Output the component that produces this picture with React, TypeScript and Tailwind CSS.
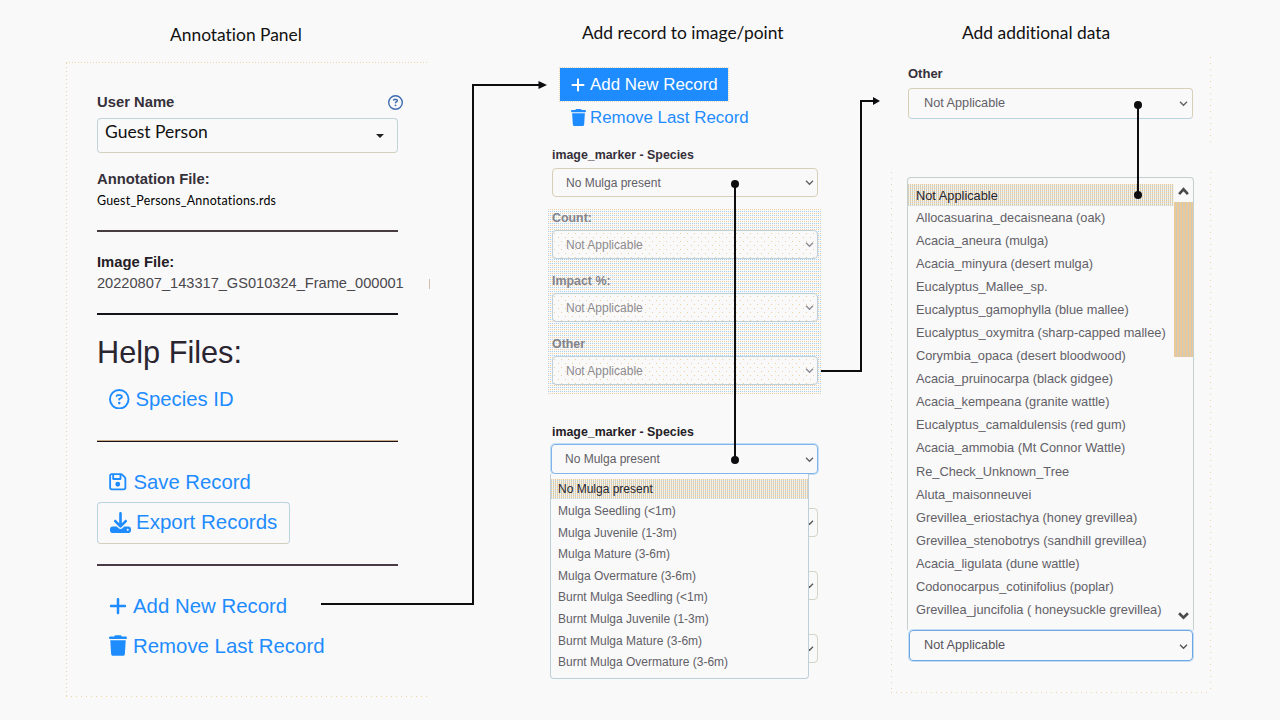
import type { ReactNode } from "react";
import {
  FaDownload,
  FaPlus,
  FaRegCircleQuestion,
  FaRegFloppyDisk,
  FaTrash,
} from "react-icons/fa6";

const SPECIES = [
  "No Mulga present",
  "Mulga Seedling (<1m)",
  "Mulga Juvenile (1-3m)",
  "Mulga Mature (3-6m)",
  "Mulga Overmature (3-6m)",
  "Burnt Mulga Seedling (<1m)",
  "Burnt Mulga Juvenile (1-3m)",
  "Burnt Mulga Mature (3-6m)",
  "Burnt Mulga Overmature (3-6m)",
];

const OTHER = [
  "Not Applicable",
  "Allocasuarina_decaisneana (oak)",
  "Acacia_aneura (mulga)",
  "Acacia_minyura (desert mulga)",
  "Eucalyptus_Mallee_sp.",
  "Eucalyptus_gamophylla (blue mallee)",
  "Eucalyptus_oxymitra (sharp-capped mallee)",
  "Corymbia_opaca (desert bloodwood)",
  "Acacia_pruinocarpa (black gidgee)",
  "Acacia_kempeana (granite wattle)",
  "Eucalyptus_camaldulensis (red gum)",
  "Acacia_ammobia (Mt Connor Wattle)",
  "Re_Check_Unknown_Tree",
  "Aluta_maisonneuvei",
  "Grevillea_eriostachya (honey grevillea)",
  "Grevillea_stenobotrys (sandhill grevillea)",
  "Acacia_ligulata (dune wattle)",
  "Codonocarpus_cotinifolius (poplar)",
  "Grevillea_juncifolia ( honeysuckle grevillea)",
];

// Stippled fills: a dense tan/blue grid, a denser one for selected rows, and sparse tan dots.
const DOTS =
  "bg-[linear-gradient(180deg,transparent_1px,#f9f9f9_1px),linear-gradient(90deg,transparent_1px,#f9f9f9_1px),linear-gradient(180deg,#efcf9f_2px,#a3d0f3_2px)] bg-[length:100%_2px,2px_100%,100%_4px]";
const SELECTED =
  "bg-[linear-gradient(90deg,transparent_1px,#f7f0e2_1px),linear-gradient(180deg,#edcb98_1px,#bcd6e6_1px)] bg-[length:2px_100%,100%_2px]";
const SPARSE =
  "bg-[#f9f9f9] bg-[conic-gradient(from_270deg_at_1px_1px,#efcf9f_90deg,transparent_0),conic-gradient(from_270deg_at_1px_1px,#efcf9f_90deg,transparent_0)] bg-[length:7px_8px] bg-[position:1px_2px,5px_6px]";

function Chevron({ up = false, bold = false }: { up?: boolean; bold?: boolean }) {
  return (
    <svg
      viewBox="0 0 10 8"
      className={bold ? "h-[9px] w-[11px]" : "h-[7px] w-[9px]"}
      fill="none"
      stroke="currentColor"
      strokeWidth={bold ? 2.4 : 1.5}
    >
      <path d={up ? "M1 6.4 5 2l4 4.4" : "M1 2l4 4 4-4"} />
    </svg>
  );
}

function Select({
  children,
  className,
}: {
  children?: ReactNode;
  className: string;
}) {
  return (
    <div className={`flex items-center justify-between rounded-[4px] border ${className}`}>
      <span>{children}</span>
      <Chevron />
    </div>
  );
}

function Title({ children, className }: { children: ReactNode; className: string }) {
  return (
    <h2
      className={`font-['Lato','Liberation_Sans',sans-serif] text-[17.4px] leading-6 text-[#111] [font-variant-ligatures:none] ${className}`}
    >
      {children}
    </h2>
  );
}

function AnnotationPanel() {
  return (
    <section className="ml-[66px] w-[364px] pt-[23px]">
      <Title className="ml-[104px]">Annotation Panel</Title>
      <div className="mt-[15px] mr-[2px] h-px bg-[repeating-linear-gradient(90deg,#f1d3a5_0_1px,transparent_1px_3px)]" />
      <div className="flex h-[633px]">
        <div className="w-px bg-[repeating-linear-gradient(180deg,#e6d3b0_0_1px,transparent_1px_4px)]" />
        <div className="ml-[30px] w-[301px] whitespace-nowrap text-[#35303a]">
          <div className="mt-[29px] flex h-5 items-center justify-between text-[14.8px] font-bold">
            <span className="pt-px">User Name</span>
            <FaRegCircleQuestion className="-mr-[5px] size-[15px] text-[#3d6cb0]" />
          </div>
          <div className="mt-[6px] flex h-[35px] justify-between rounded-[4px] border border-[#c3d3da] border-b-[#d2cfbe] pl-[7px] pr-[13px]">
            <span className="font-['Lato'] text-[17.5px] leading-[26px] text-[#111]">
              Guest Person
            </span>
            <svg viewBox="0 0 8 4" className="mt-[15px] h-1 w-2 fill-[#222]">
              <path d="M0 0h8L4 4z" />
            </svg>
          </div>
          <div className="mt-4 h-5 text-[14.8px] font-bold leading-5">Annotation File:</div>
          <div className="h-6 font-['Lato'] text-[12.4px] leading-6 tracking-[0.24px] text-black [font-variant-ligatures:none]">
            Guest_Persons_Annotations.rds
          </div>
          <div className="mt-[17px] h-[2px] bg-[#463c42]" />
          <div className="mt-[20px] h-5 text-[14.8px] font-bold leading-[21px] text-[#242026]">
            Image File:
          </div>
          <div className="mt-px flex h-[21px] items-center text-[14.6px] text-[#4a474d]">
            20220807_143317_GS010324_Frame_000001
            <span className="ml-[25px] h-[10px] w-px shrink-0 bg-[#cfbfae]" />
          </div>
          <div className="mt-[19px] h-[2px] bg-[#17131a]" />
          <div className="mt-[18px] h-10 text-[30.7px] leading-10 text-[#2a2530]">
            Help Files:
          </div>
          <div className="ml-3 mt-[12px] flex h-7 items-center gap-[6px] text-[20.3px] text-[#1e8cff]">
            <FaRegCircleQuestion className="size-[20.500px]" />
            Species ID
          </div>
          <div className="mt-[27px] h-px bg-[#c8a888]" />
          <div className="h-px bg-[#17131a]" />
          <div className="ml-[11px] mt-[26px] flex h-7 items-center gap-[6px] text-[20.3px] text-[#1e8cff]">
            <FaRegFloppyDisk className="size-[19.500px]" />
            Save Record
          </div>
          <div className="mt-[6px] flex h-[42px] w-[193px] items-center gap-[5px] rounded-[4px] border border-[#b9d3e3] border-b-[#d2cfbe] pl-[12px] text-[20.5px] text-[#1e8cff]">
            <FaDownload className="mb-[2px] size-[21px]" />
            <span className="pb-px">Export Records</span>
          </div>
          <div className="mt-[20px] h-[2px] bg-[#493c46]" />
          <div className="ml-[11px] mt-[26px] flex h-7 items-center gap-[5px] text-[20.4px] text-[#1e8cff]">
            <FaPlus className="size-5" />
            Add New Record
          </div>
          <div className="ml-3 mt-[12px] flex h-7 items-center gap-[6px] text-[20.4px] text-[#1e8cff]">
            <FaTrash className="mb-px h-[21px] w-[18px]" />
            Remove Last Record
          </div>
        </div>
      </div>
      <div className="mr-[2px] h-px bg-[repeating-linear-gradient(90deg,#f1d3a5_0_1px,transparent_1px_5px)]" />
    </section>
  );
}

function RecordPanel() {
  const box = "h-[29px] w-[266px] pl-[13px] pr-[3px] text-[12px]";
  return (
    <section className="ml-[118px] w-[274px] whitespace-nowrap pt-[21px]">
      <Title className="ml-[34px]">Add record to image/point</Title>
      <div className="ml-3 mt-[23px] flex h-[33px] w-[168px] items-center gap-[4px] bg-[#1e8cff] pl-[10px] text-[16.9px] text-white outline-1 outline-dotted outline-[#ecd9b4]">
        <FaPlus className="size-4" />
        Add New Record
      </div>
      <div className="ml-[23px] mt-[4px] flex h-6 items-center gap-[4px] text-[16.9px] text-[#1e8cff]">
        <FaTrash className="h-[17px] w-[15px]" />
        <span className="pt-px">Remove Last Record</span>
      </div>
      <div className="ml-1 mt-[16px] h-5 text-[12.4px] font-bold leading-[21px] text-[#35303a]">
        image_marker - Species
      </div>
      <Select className={`ml-1 mt-[3px] ${box} border-[#d8cfb8] text-[#626067]`}>
        No Mulga present
      </Select>
      <div className={`mt-[12px] h-[186px] pl-1 text-[#8d8b90] ${DOTS}`}>
        {["Count:", "Impact %:", "Other"].map((label) => (
          <div key={label} className="h-[63px]">
            <div className="h-[21px] text-[12.4px] font-bold leading-[18px] text-[#85838a]">
              {label}
            </div>
            <Select className={`${box} border-[#bdcfd8] ${SPARSE}`}>Not Applicable</Select>
          </div>
        ))}
      </div>
      <div className="ml-1 mt-[27px] h-5 text-[12.4px] font-bold leading-5 text-[#242026]">
        image_marker - Species
      </div>
      <div className="relative ml-[3px] mt-[2px]">
        <Select className="h-[30px] w-[267px] border-[#7fb3ea] pl-[13px] pr-[3px] text-[12px] text-[#626067] shadow-[0_0_0_1px_#c3def4]">
          No Mulga present
        </Select>
        {[0, 1, 2].map((row) => (
          <Select
            key={row}
            className="mt-[34px] h-[29px] w-[267px] border-[#d3d3c6] pr-[3px] text-[#555]"
          />
        ))}
        <div className="absolute -left-px top-[30px] h-[205px] w-[259px] rounded-b-[4px] border border-t-0 border-[#bdd0da] bg-[#f9f9f9] pt-[5px] text-[12px] text-[#626067]">
          {SPECIES.map((name, i) => (
            <div
              key={name}
              className={
                i === 0
                  ? `mb-[2px] h-5 pl-[7px] leading-[21px] text-[#28242c] ${SELECTED}`
                  : "h-[21.6px] pl-[7px] leading-[21.6px]"
              }
            >
              {name}
            </div>
          ))}
        </div>
      </div>
    </section>
  );
}

function DataPanel() {
  return (
    <section className="ml-[69px] w-[320px] whitespace-nowrap pt-[21px]">
      <Title className="ml-[71px]">Add additional data</Title>
      <div className="mt-3 flex h-[115px]">
        <div className="w-[319px] pl-[17px] pt-[7px]">
          <div className="h-5 text-[13px] font-bold leading-5 text-[#35303a]">Other</div>
          <Select className="mt-[4px] h-[31px] w-[285px] border-[#d8cfb8] border-b-[#b9d3e3] pl-[15px] pr-[4px] text-[12.7px] text-[#626067]">
            Not Applicable
          </Select>
        </div>
        <div className="h-[88px] w-px bg-[repeating-linear-gradient(180deg,#f1d3a5_0_1px,transparent_1px_6px)]" />
      </div>
      <div className="flex h-[520px]">
        <div className="w-px bg-[repeating-linear-gradient(180deg,#dfd0b8_0_1px,transparent_1px_6px)]" />
        <div className="ml-[15px] w-[303px] pt-[5px]">
          <div className="flex h-[453px] w-[287px] rounded-t-[4px] border border-b-0 border-[#c4cfcf]">
            <div className="w-[267px] pt-[6px] text-[12.8px] text-[#626067]">
              {OTHER.map((name, i) => (
                <div
                  key={name}
                  className={
                    i === 0
                      ? `h-[22px] pl-2 leading-[24px] text-[#28242c] ${SELECTED}`
                      : "h-[23.06px] pl-2 leading-6"
                  }
                >
                  {name}
                </div>
              ))}
            </div>
            <div className="flex w-[19px] flex-col items-center text-[#4c494c]">
              <div className="flex h-[24px] items-center pt-[3px]">
                <Chevron up bold />
              </div>
              <div className="h-[155px] w-full bg-[repeating-linear-gradient(90deg,#ecca98_0_2px,#ccc9bd_2px_3px)]" />
              <div className="mt-auto flex h-[27px] items-center pb-[2px]">
                <Chevron bold />
              </div>
            </div>
          </div>
          <Select className="ml-[2px] h-[31px] w-[284px] border-[#6fa6e4] pl-[14px] pr-[4px] pt-px text-[12.7px] text-[#55535a] shadow-[0_0_0_1px_#c3def4]">
            Not Applicable
          </Select>
        </div>
        <div className="w-px bg-[repeating-linear-gradient(180deg,#f1d3a5_0_1px,transparent_1px_6px)]" />
      </div>
      <div className="h-px bg-[repeating-linear-gradient(90deg,#f1d3a5_0_1px,transparent_1px_5px)]" />
    </section>
  );
}

function Connectors() {
  return (
    <svg
      viewBox="0 0 1280 720"
      className="pointer-events-none absolute inset-0 h-[720px] w-[1280px]"
      fill="none"
      stroke="#0d0d0f"
      strokeWidth="2"
    >
      <path d="M321 604H473V85H540M821 371H861V101H874M735 184V460M1138 105V195" />
      <g fill="#0d0d0f" stroke="none">
        <path d="M538.500 81 547 85l-8.500 4zM873 97l7 4-7 4z" />
        <circle cx="735" cy="184" r="4" />
        <circle cx="735" cy="460" r="4" />
        <circle cx="1138" cy="105" r="4" />
        <circle cx="1138" cy="195" r="4" />
      </g>
    </svg>
  );
}

export default function App() {
  return (
    <main className="relative flex h-[720px] w-[1280px] overflow-hidden bg-[#f9f9f9] font-['Liberation_Sans',Arial,sans-serif]">
      <AnnotationPanel />
      <RecordPanel />
      <DataPanel />
      <Connectors />
    </main>
  );
}
